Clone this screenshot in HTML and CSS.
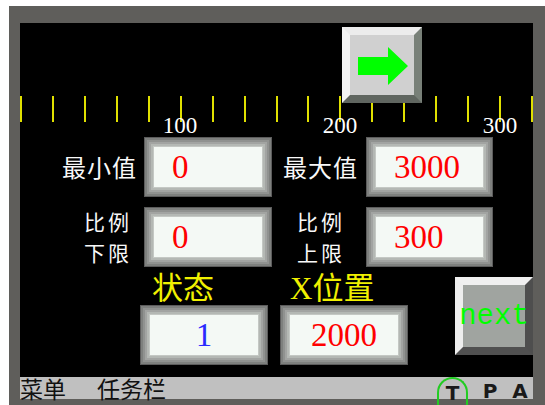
FILE: index.html
```html
<!DOCTYPE HTML>
<html>
  <head>
    <meta http-equiv="Content-type" content="text/html;charset=UTF-8">
    <title>HMI scale setup</title>
    <link rel="stylesheet" href="styles.css">
  </head>
  <body>
    <div class="frame">
      <div class="screen">
        <!-- jog button over the scale -->
        <div class="jog">
          <svg width="62" height="60" viewBox="0 0 62 60">
            <polygon points="8,22 38,22 38,12 58,31 38,50 38,40 8,40" fill="#00ff00"/>
          </svg>
        </div>

        <div class="ticks">
          <i></i><i></i><i></i><i></i><i></i><i></i><i></i><i></i><i></i>
          <i></i><i></i><i></i><i></i><i></i><i></i><i></i><i></i>
        </div>
        <div class="scale">
          <span>100</span>
          <span>200</span>
          <span>300</span>
        </div>

        <div class="form">
          <div class="lbl">最小值</div>
          <div class="box"><div class="val">0</div></div>
          <div class="lbl right">最大值</div>
          <div class="box"><div class="val">3000</div></div>

          <div class="lbl two">比例<br>下限</div>
          <div class="box"><div class="val">0</div></div>
          <div class="lbl right two">比例<br>上限</div>
          <div class="box"><div class="val">300</div></div>
        </div>

        <div class="bottom">
          <div class="field">
            <div class="cap">状态</div>
            <div class="box"><div class="val center blue">1</div></div>
          </div>
          <div class="field">
            <div class="cap">X位置</div>
            <div class="box"><div class="val center">2000</div></div>
          </div>
          <div class="next">next</div>
        </div>
      </div>

      <div class="status">
        <span>菜单</span>
        <span class="task">任务栏</span>
        <div class="flags">
          <span class="flag on">T</span>
          <span class="flag p">P</span>
          <span class="flag a">A</span>
        </div>
      </div>
    </div>
  </body>
</html>
```

FILE: styles.css
```css
html, body {
margin: 0;
background: #fff;
overflow: hidden;
font-family: "Noto Sans CJK SC", sans-serif;
}
.frame {
margin: 6px 0 0 9px;
padding: 17px 12px 6px 11px;
width: 513px;
background: #5f5e5b;
}
.screen {
position: relative;
height: 354px;
background: #000;
}
.jog {
position: absolute;
left: 322px;
top: 4px;
width: 80px;
height: 76px;
box-sizing: border-box;
border: 8px solid;
border-color: #ececec #788078 #606660 #f4f4f4;
background: #d0d0d0;
}
.jog svg {
display: block;
}
.ticks {
display: flex;
justify-content: space-between;
padding-top: 73px;
height: 26px;
}
.ticks i {
width: 2px;
background: #e0e000;
}
.scale {
display: flex;
gap: 96px;
margin: -6px 0 0 128px;
height: 20px;
}
.scale span {
flex: none;
width: 64px;
text-align: center;
font: 23px/20px "Liberation Serif", serif;
color: #fff;
}
.form {
display: grid;
grid-template-columns: 124px 128px 94px 127px;
grid-auto-rows: 60px;
row-gap: 10px;
margin-top: 1px;
}
.lbl {
align-self: center;
text-align: right;
padding-right: 7px;
color: #f8f8f8;
font-size: 24px;
line-height: 28px;
letter-spacing: 1px;
}
.lbl.right {
padding-right: 8px;
}
.lbl.two {
padding-right: 12px;
font-size: 21px;
line-height: 31px;
letter-spacing: 3px;
}
.lbl.right.two {
padding-right: 21px;
}
.box {
box-sizing: border-box;
height: 60px;
padding: 8px;
border: 1px solid #5c5c5c;
background: #b4b8b4;
box-shadow: inset 0 0 0 2px #7e807e, inset 0 0 0 4px #909290, inset 0 0 0 6px #a2a4a2;
}
.val {
display: flex;
align-items: center;
box-sizing: border-box;
height: 100%;
padding-left: 18px;
border: 1px solid #c4c8c4;
background: #f4f9f5;
color: #ff0000;
font: 33px/40px "Liberation Serif", serif;
}
.val.center {
justify-content: center;
padding-left: 0;
}
.val.blue {
color: #2a2aff;
}
.bottom {
display: flex;
align-items: flex-start;
margin-top: 6px;
padding-left: 120px;
}
.field {
width: 128px;
}
.field + .field {
margin-left: 12px;
}
.cap {
height: 32px;
padding-left: 12px;
color: #f0f000;
font: 31px/32px "Liberation Serif", "Noto Sans CJK SC", serif;
}
.field + .field .cap {
padding-left: 10px;
}
.next {
display: flex;
align-items: center;
justify-content: center;
box-sizing: border-box;
width: 78px;
height: 78px;
margin: 4px 0 0 47px;
border: 8px solid;
border-color: #f0f0f0 #4e4e4e #505050 #eeeeee;
background: #a0a4a0;
color: #00ff00;
font: 29px "Liberation Mono", monospace;
}
.status {
display: flex;
align-items: flex-start;
height: 22px;
background: #c0c0c0;
color: #111;
font-size: 23px;
line-height: 22px;
}
.task {
margin-left: 31px;
}
.flags {
display: flex;
margin-left: auto;
}
.flag {
width: 28px;
text-align: center;
font: bold 20px/28px "DejaVu Sans", sans-serif;
color: #1a1a1a;
}
.flag.on {
box-sizing: border-box;
width: 31px;
height: 28px;
line-height: 28px;
border: 2px solid #22cc22;
border-bottom: none;
border-radius: 16px 16px 0 0;
margin-right: 8px;
}
.flag.p {
margin-right: 3px;
}
.flag.a {
width: 26px;
}
```
